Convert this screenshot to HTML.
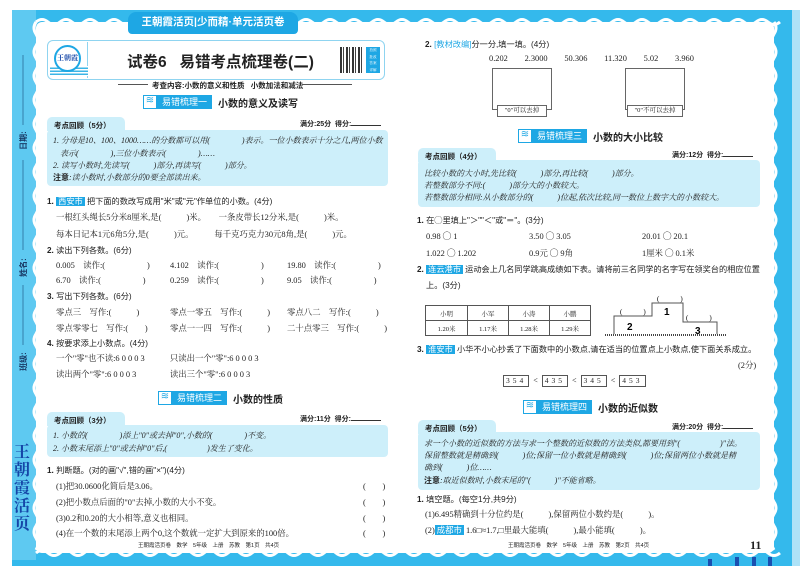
<!DOCTYPE html>
<html><head><meta charset="utf-8">
<style>
*{margin:0;padding:0;box-sizing:border-box}
body{width:800px;height:566px;overflow:hidden;background:#fff;position:relative;font-family:"Liberation Serif","Noto Serif CJK SC",serif;font-size:8.4px;color:#222}
.a{position:absolute;white-space:nowrap}
.s{font-family:"Liberation Sans","Noto Sans CJK SC",sans-serif}
.b{font-weight:bold}
.box{position:absolute;background:#cdeffa;border-radius:4px}
.tab{position:absolute;background:#cdeffa;border-radius:5px 5px 0 0;height:14px;font-family:"Liberation Sans","Noto Sans CJK SC",sans-serif;font-weight:bold;font-size:7.5px;padding:3px 0 0 7px}
.badge{position:absolute;height:14px;display:flex;align-items:center}
.badge .ic{width:14px;height:14px;background:#fff;border:1.5px solid #1ea7e4;color:#1ea7e4;font-size:10px;line-height:10px;text-align:center;font-family:"DejaVu Sans",sans-serif}
.badge .tx{background:#1ea7e4;color:#fff;height:14px;padding:0 5px;font-size:9px;line-height:14px;font-family:"Liberation Sans","Noto Sans CJK SC",sans-serif}
.badge .tt{margin-left:6px;font-size:10px;font-weight:bold;font-family:"Liberation Sans","Noto Sans CJK SC",sans-serif}
.tag{background:#1ea7e4;color:#fff;padding:0 2px;font-family:"Liberation Sans","Noto Sans CJK SC",sans-serif}
.q{font-family:"Liberation Sans","Noto Sans CJK SC",sans-serif;font-size:8.2px}
.it{font-family:"Liberation Serif","Noto Serif CJK SC",serif;font-style:italic;font-size:8px}
.nb{display:inline-block;border:1px solid #555;padding:0 2px;letter-spacing:3px;font-size:7.5px;line-height:10px}
</style></head><body>
<div class="a" style="left:12px;top:10px;width:782px;height:556px;background:#34b9ec"></div>
<div class="a" style="left:792px;top:10px;width:8px;height:556px;background:#aee2f7"></div>
<div class="a" style="left:12px;top:10px;width:24px;height:550px;background:#5ec9f1"></div>
<div class="a" style="left:36px;top:22px;width:738px;height:531px;background:#fff;border-radius:6px"></div>
<svg class="a" style="left:0;top:0" width="800" height="566">
<path d="M36 22 q6 -5 12 0 t12 0 t12 0 t12 0 t12 0 t12 0 t12 0 t12 0 t12 0 t12 0 t12 0 t12 0 t12 0 t12 0 t12 0 t12 0 t12 0 t12 0 t12 0 t12 0 t12 0 t12 0 t12 0 t12 0 t12 0 t12 0 t12 0 t12 0 t12 0 t12 0 t12 0 t12 0 t12 0 t12 0 t12 0 t12 0 t12 0 t12 0 t12 0 t12 0 t12 0 t12 0 t12 0 t12 0 t12 0 t12 0 t12 0 t12 0 t12 0 t12 0 t12 0 t12 0 t12 0 t12 0 t12 0 t12 0 t12 0 t12 0 t12 0 t12 0 t12 0 t12 0" fill="none" stroke="#fff" stroke-width="3"/>
<path d="M36 553 q6 -5 12 0 t12 0 t12 0 t12 0 t12 0 t12 0 t12 0 t12 0 t12 0 t12 0 t12 0 t12 0 t12 0 t12 0 t12 0 t12 0 t12 0 t12 0 t12 0 t12 0 t12 0 t12 0 t12 0 t12 0 t12 0 t12 0 t12 0 t12 0 t12 0 t12 0 t12 0 t12 0 t12 0 t12 0 t12 0 t12 0 t12 0 t12 0 t12 0 t12 0 t12 0 t12 0 t12 0 t12 0 t12 0 t12 0 t12 0 t12 0 t12 0 t12 0 t12 0 t12 0 t12 0 t12 0 t12 0 t12 0 t12 0 t12 0 t12 0 t12 0 t12 0 t12 0" fill="none" stroke="#fff" stroke-width="3"/>
<path d="M36 22 q-4 6 0 12 t0 12 t0 12 t0 12 t0 12 t0 12 t0 12 t0 12 t0 12 t0 12 t0 12 t0 12 t0 12 t0 12 t0 12 t0 12 t0 12 t0 12 t0 12 t0 12 t0 12 t0 12 t0 12 t0 12 t0 12 t0 12 t0 12 t0 12 t0 12 t0 12 t0 12 t0 12 t0 12 t0 12 t0 12 t0 12 t0 12 t0 12 t0 12 t0 12 t0 12 t0 12 t0 12 t0 12" fill="none" stroke="#fff" stroke-width="3"/>
<path d="M774 22 q4 6 0 12 t0 12 t0 12 t0 12 t0 12 t0 12 t0 12 t0 12 t0 12 t0 12 t0 12 t0 12 t0 12 t0 12 t0 12 t0 12 t0 12 t0 12 t0 12 t0 12 t0 12 t0 12 t0 12 t0 12 t0 12 t0 12 t0 12 t0 12 t0 12 t0 12 t0 12 t0 12 t0 12 t0 12 t0 12 t0 12 t0 12 t0 12 t0 12 t0 12 t0 12 t0 12 t0 12 t0 12" fill="none" stroke="#fff" stroke-width="3"/>
<line x1="23" y1="55" x2="23" y2="125" stroke="#2a6e99" stroke-width="0.8"/>
<line x1="23" y1="160" x2="23" y2="250" stroke="#2a6e99" stroke-width="0.8"/>
<line x1="23" y1="285" x2="23" y2="345" stroke="#2a6e99" stroke-width="0.8"/>
<g fill="#1a4fb0"><rect x="735" y="557" width="4" height="9"/><rect x="752" y="557" width="4" height="9"/><rect x="768" y="557" width="4" height="9"/><rect x="708" y="559" width="4" height="7"/></g>
</svg>
<div class="a s b" style="left:14px;top:135px;transform:rotate(-90deg);font-size:8px;color:#1a3a66">日期:</div>
<div class="a s b" style="left:14px;top:262px;transform:rotate(-90deg);font-size:8px;color:#1a3a66">姓名:</div>
<div class="a s b" style="left:14px;top:356px;transform:rotate(-90deg);font-size:8px;color:#1a3a66">班级:</div>
<div class="a" style="left:14px;top:442px;width:18px;font-size:16px;line-height:18px;color:#1546a8;font-family:'Noto Serif CJK SC',serif;font-weight:bold;white-space:normal;word-break:break-all">王朝霞活页</div>

<div class="a s" style="left:128px;top:12px;width:170px;height:22px;background:#1ea7e4;border-radius:8px 8px 4px 4px;color:#fff;font-size:10.5px;font-weight:bold;text-align:center;line-height:20px">王朝霞活页|少而精·单元活页卷</div>

<div class="a" style="left:47px;top:40px;width:338px;height:40px;border:1.5px solid #8fd4f0;border-radius:6px"></div>
<div class="a" style="left:50px;top:42px;width:38px;height:36px;border-right:1px solid #8fd4f0"></div>
<div class="a" style="left:50px;top:66px;width:38px;height:10px;background:repeating-linear-gradient(#fff 0 1.5px,#3bb5e6 1.5px 3px)"></div>
<div class="a b" style="left:54px;top:45px;width:27px;height:27px;border-radius:50%;border:2.5px solid #1ea7e4;background:#fff;font-size:7px;color:#1546a8;text-align:center;line-height:22px">王朝霞</div>
<div class="a s b" style="left:127px;top:50px;font-size:15.5px">试卷6&nbsp;&nbsp;&nbsp;易错考点梳理卷(二)</div>
<div class="a" style="left:340px;top:47px;width:24px;height:26px;background:repeating-linear-gradient(90deg,#111 0 2px,#fff 2px 3px,#222 3px 4px,#fff 4px 6px),#111;opacity:.85"></div>
<div class="a" style="left:366px;top:47px;width:14px;height:26px;background:#1ea7e4;color:#fff;font-size:3.6px;line-height:6.5px;text-align:center">拍照<br>批改<br>答案<br>详解</div>
<div class="a" style="left:118px;top:84px;width:30px;border-top:1px solid #555"></div>
<div class="a s b" style="left:152px;top:80px;font-size:7.5px">考查内容:小数的意义和性质&nbsp;&nbsp;&nbsp;小数加法和减法</div>
<div class="a" style="left:302px;top:84px;width:50px;border-top:1px solid #555"></div>

<div class="badge" style="left:143px;top:95px"><span class="ic">≋</span><span class="tx">易错梳理一</span><span class="tt">小数的意义及读写</span></div>
<div class="tab" style="left:47px;top:117px;width:78px">考点回顾（5分）</div>
<div class="a s b" style="left:300px;top:119px;font-size:7px">满分:25分&nbsp;&nbsp;得分:<span style="display:inline-block;width:30px;border-bottom:1px solid #333"></span></div>
<div class="box" style="left:47px;top:130px;width:341px;height:56px"></div>
<div class="a it" style="left:53px;top:135px">1. 分母是10、100、1000……的分数都可以用(　　　　)表示。一位小数表示十分之几,两位小数</div>
<div class="a it" style="left:60px;top:148px">表示(　　　　),三位小数表示(　　　　)……</div>
<div class="a it" style="left:53px;top:160px">2. 读写小数时,先读写(　　　)部分,再读写(　　　)部分。</div>
<div class="a it" style="left:53px;top:172px"><b class="s" style="font-style:normal">注意</b>:读小数时,小数部分的0要全部读出来。</div>

<div class="a q" style="left:47px;top:195px"><b>1.</b> <span class="tag">西安市</span> 把下面的数改写成用"米"或"元"作单位的小数。(4分)</div>
<div class="a" style="left:56px;top:211px">一根红头绳长5分米8厘米,是(　　　)米。　　一条皮带长12分米,是(　　　)米。</div>
<div class="a" style="left:56px;top:228px">每本日记本1元6角5分,是(　　　)元。　　　每千克巧克力30元8角,是(　　　)元。</div>
<div class="a q" style="left:47px;top:244px"><b>2.</b> 读出下列各数。(6分)</div>
<div class="a" style="left:56px;top:259px">0.005　读作:(　　　　　)</div><div class="a" style="left:170px;top:259px">4.102　读作:(　　　　　)</div><div class="a" style="left:287px;top:259px">19.80　读作:(　　　　　)</div>
<div class="a" style="left:56px;top:274px">6.70　读作:(　　　　　)</div><div class="a" style="left:170px;top:274px">0.259　读作:(　　　　　)</div><div class="a" style="left:287px;top:274px">9.05　读作:(　　　　　)</div>
<div class="a q" style="left:47px;top:290px"><b>3.</b> 写出下列各数。(6分)</div>
<div class="a" style="left:56px;top:306px">零点三　写作:(　　　)</div><div class="a" style="left:170px;top:306px">零点一零五　写作:(　　　)</div><div class="a" style="left:287px;top:306px">零点八二　写作:(　　　)</div>
<div class="a" style="left:56px;top:322px">零点零零七　写作:(　　)</div><div class="a" style="left:170px;top:322px">零点一一四　写作:(　　　)</div><div class="a" style="left:287px;top:322px">二十点零三　写作:(　　　)</div>
<div class="a q" style="left:47px;top:337px"><b>4.</b> 按要求添上小数点。(4分)</div>
<div class="a" style="left:56px;top:352px">一个"零"也不读:6 0 0 0 3　　　只读出一个"零":6 0 0 0 3</div>
<div class="a" style="left:56px;top:368px">读出两个"零":6 0 0 0 3　　　　读出三个"零":6 0 0 0 3</div>

<div class="badge" style="left:158px;top:391px"><span class="ic">≋</span><span class="tx">易错梳理二</span><span class="tt">小数的性质</span></div>
<div class="tab" style="left:47px;top:412px;width:78px">考点回顾（3分）</div>
<div class="a s b" style="left:300px;top:414px;font-size:7px">满分:11分&nbsp;&nbsp;得分:<span style="display:inline-block;width:30px;border-bottom:1px solid #333"></span></div>
<div class="box" style="left:47px;top:425px;width:341px;height:32px"></div>
<div class="a it" style="left:53px;top:430px">1. 小数的(　　　　)添上"0"或去掉"0",小数的(　　　　)不变。</div>
<div class="a it" style="left:53px;top:443px">2. 小数末尾添上"0"或去掉"0"后,(　　　　　)发生了变化。</div>
<div class="a q" style="left:47px;top:464px"><b>1.</b> 判断题。(对的画"√",错的画"×")(4分)</div>
<div class="a" style="left:56px;top:480px">(1)把30.0600化简后是3.06。</div>
<div class="a" style="left:56px;top:496px">(2)把小数点后面的"0"去掉,小数的大小不变。</div>
<div class="a" style="left:56px;top:512px">(3)0.2和0.20的大小相等,意义也相同。</div>
<div class="a" style="left:56px;top:527px">(4)在一个数的末尾添上两个0,这个数就一定扩大到原来的100倍。</div>
<div class="a" style="left:363px;top:480px">(　　)</div><div class="a" style="left:363px;top:496px">(　　)</div><div class="a" style="left:363px;top:512px">(　　)</div><div class="a" style="left:363px;top:527px">(　　)</div>
<div class="a s" style="left:138px;top:541px;font-size:5.5px">王朝霞活页卷　数学　5年级　上册　苏教　第1页　共4页</div>

<div class="a q" style="left:425px;top:38px"><b>2.</b> <span style="color:#1ea7e4">[教材改编]</span>分一分,填一填。(4分)</div>
<div class="a" style="left:489px;top:52px">0.202　　2.3000　　50.306　　11.320　　5.02　　3.960</div>
<div class="a" style="left:492px;top:68px;width:60px;height:42px;border:1px solid #666"></div>
<div class="a" style="left:497px;top:105px;width:50px;height:12px;border:1px solid #666;background:#fff;font-size:6.5px;text-align:center;line-height:10px">"0"可以去掉</div>
<div class="a" style="left:625px;top:68px;width:60px;height:42px;border:1px solid #666"></div>
<div class="a" style="left:627px;top:105px;width:56px;height:12px;border:1px solid #666;background:#fff;font-size:6.5px;text-align:center;line-height:10px">"0"不可以去掉</div>

<div class="badge" style="left:518px;top:129px"><span class="ic">≋</span><span class="tx">易错梳理三</span><span class="tt">小数的大小比较</span></div>
<div class="tab" style="left:418px;top:148px;width:78px">考点回顾（4分）</div>
<div class="a s b" style="left:672px;top:150px;font-size:7px">满分:12分&nbsp;&nbsp;得分:<span style="display:inline-block;width:30px;border-bottom:1px solid #333"></span></div>
<div class="box" style="left:418px;top:160px;width:342px;height:47px"></div>
<div class="a it" style="left:424px;top:168px">比较小数的大小时,先比较(　　　)部分,再比较(　　　)部分。</div>
<div class="a it" style="left:424px;top:180px">若整数部分不同:(　　　)部分大的小数较大。</div>
<div class="a it" style="left:424px;top:192px">若整数部分相同:从小数部分的(　　　)位起,依次比较,同一数位上数字大的小数较大。</div>
<div class="a q" style="left:417px;top:214px"><b>1.</b> 在◯里填上"＞""＜"或"＝"。(3分)</div>
<div class="a" style="left:426px;top:230px">0.98 ◯ 1</div><div class="a" style="left:529px;top:230px">3.50 ◯ 3.05</div><div class="a" style="left:642px;top:230px">20.01 ◯ 20.1</div>
<div class="a" style="left:426px;top:247px">1.022 ◯ 1.202</div><div class="a" style="left:529px;top:247px">0.9元 ◯ 9角</div><div class="a" style="left:642px;top:247px">1厘米 ◯ 0.1米</div>
<div class="a q" style="left:417px;top:263px"><b>2.</b> <span class="tag">连云港市</span> 运动会上几名同学跳高成绩如下表。请将前三名同学的名字写在领奖台的相应位置</div>
<div class="a q" style="left:426px;top:279px">上。(3分)</div>
<table class="a" style="left:425px;top:305px;border-collapse:collapse;font-size:6.5px;text-align:center">
<tr><td style="border:1px solid #555;width:42px;height:15px">小明</td><td style="border:1px solid #555;width:41px">小军</td><td style="border:1px solid #555;width:41px">小涛</td><td style="border:1px solid #555;width:41px">小鹏</td></tr>
<tr><td style="border:1px solid #555;height:15px">1.20米</td><td style="border:1px solid #555">1.17米</td><td style="border:1px solid #555">1.28米</td><td style="border:1px solid #555">1.29米</td></tr></table>
<svg class="a" style="left:600px;top:290px" width="135" height="50">
<g fill="none" stroke="#555" stroke-width="1"><path d="M14 44 V26 H52 V13 H83 V32 H117 V44"/></g>
<line x1="5" y1="45" x2="127" y2="45" stroke="#444" stroke-width="2" stroke-dasharray="1 1"/>
<text x="27" y="40" font-family="Liberation Sans" font-weight="bold" font-size="10">2</text>
<text x="64" y="25" font-family="Liberation Sans" font-weight="bold" font-size="10">1</text>
<text x="95" y="44" font-family="Liberation Sans" font-weight="bold" font-size="10">3</text>
<text x="20" y="24" font-size="7" font-family="Liberation Serif">(　　　)</text>
<text x="57" y="11" font-size="7" font-family="Liberation Serif">(　　　)</text>
<text x="86" y="30" font-size="7" font-family="Liberation Serif">(　　　)</text>
</svg>
<div class="a q" style="left:417px;top:343px"><b>3.</b> <span class="tag">淮安市</span> 小华不小心抄丢了下面数中的小数点,请在适当的位置点上小数点,使下面关系成立。</div>
<div class="a" style="left:738px;top:359px">(2分)</div>
<div class="a" style="left:503px;top:375px;font-size:8px"><span class="nb">354</span>&nbsp;&nbsp;&lt;&nbsp;&nbsp;<span class="nb">435</span>&nbsp;&nbsp;&lt;&nbsp;&nbsp;<span class="nb">345</span>&nbsp;&nbsp;&lt;&nbsp;&nbsp;<span class="nb">453</span></div>

<div class="badge" style="left:523px;top:400px"><span class="ic">≋</span><span class="tx">易错梳理四</span><span class="tt">小数的近似数</span></div>
<div class="tab" style="left:418px;top:420px;width:78px">考点回顾（5分）</div>
<div class="a s b" style="left:672px;top:422px;font-size:7px">满分:20分&nbsp;&nbsp;得分:<span style="display:inline-block;width:30px;border-bottom:1px solid #333"></span></div>
<div class="box" style="left:418px;top:432px;width:342px;height:58px"></div>
<div class="a it" style="left:424px;top:438px">求一个小数的近似数的方法与求一个整数的近似数的方法类似,都要用到"(　　　　　)"法。</div>
<div class="a it" style="left:424px;top:450px">保留整数就是精确到(　　　)位;保留一位小数就是精确到(　　　)位;保留两位小数就是精</div>
<div class="a it" style="left:424px;top:462px">确到(　　　)位……</div>
<div class="a it" style="left:424px;top:475px"><b class="s" style="font-style:normal">注意</b>:取近似数时,小数末尾的"(　　　)"不能省略。</div>
<div class="a q" style="left:417px;top:493px"><b>1.</b> 填空题。(每空1分,共9分)</div>
<div class="a" style="left:425px;top:508px">(1)6.495精确到十分位约是(　　　),保留两位小数约是(　　　)。</div>
<div class="a" style="left:425px;top:524px">(2)<span class="tag">成都市</span> 1.6□≈1.7,□里最大能填(　　　),最小能填(　　　)。</div>
<div class="a s" style="left:508px;top:541px;font-size:5.5px">王朝霞活页卷　数学　5年级　上册　苏教　第2页　共4页</div>
<div class="a b" style="left:750px;top:538px;font-size:12px">11</div>
</body></html>
